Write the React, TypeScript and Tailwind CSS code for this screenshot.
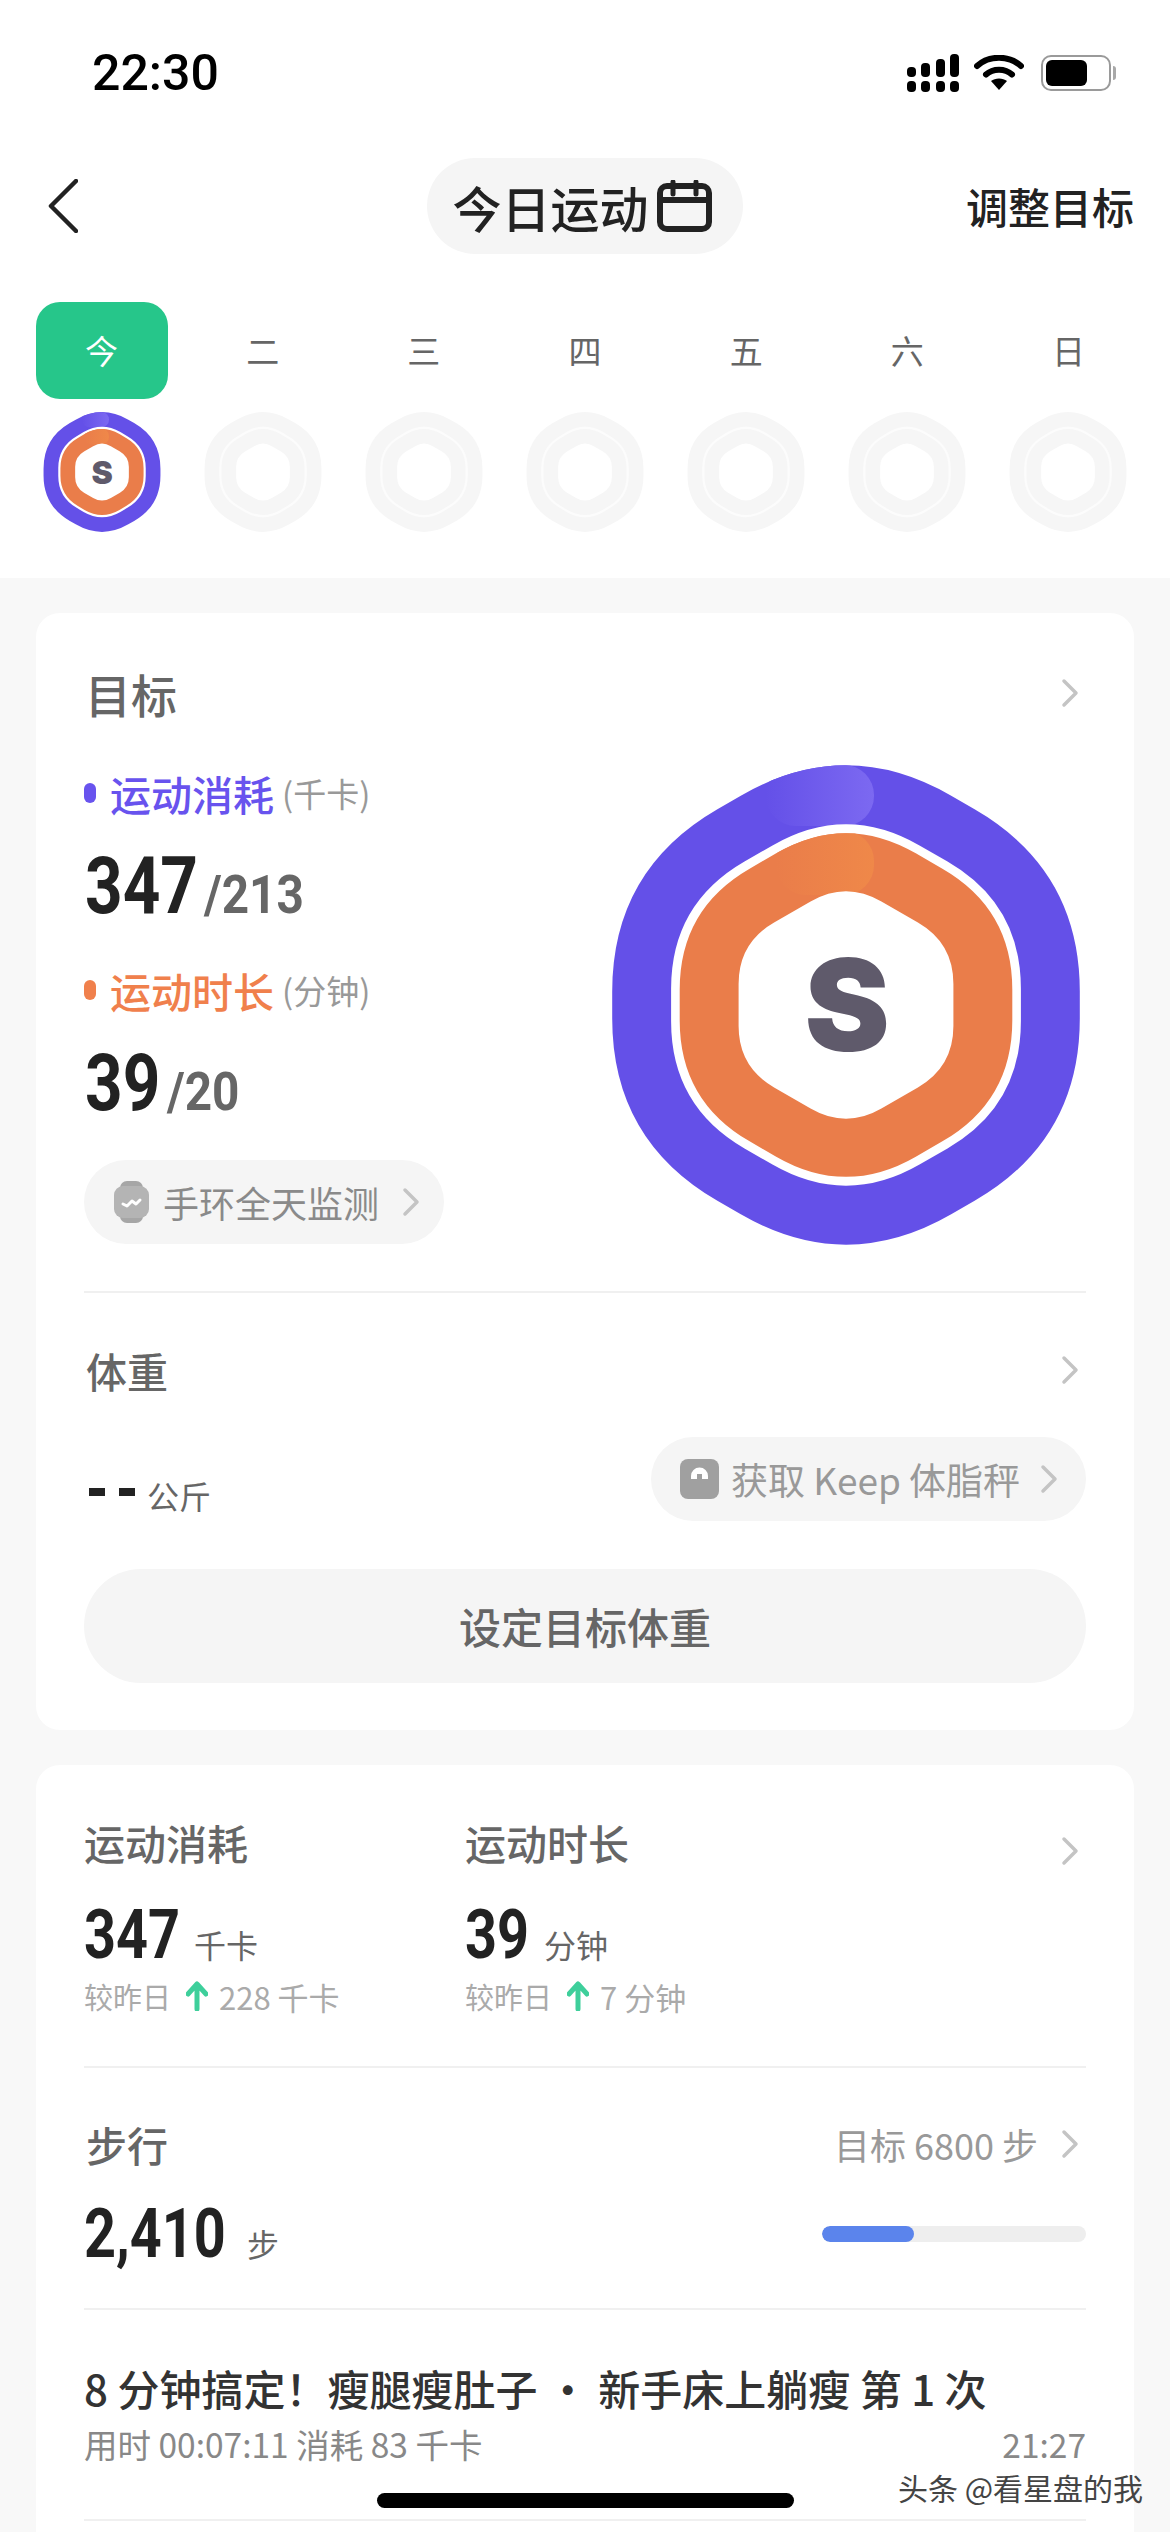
import React from 'react';

// rounded hexagon, pointy top
const hexPath = (r: number, f: number, c = 240) => {
  const pts = [0, 1, 2, 3, 4, 5].map((i) => {
    const a = (-90 + i * 60) * (Math.PI / 180);
    return [c + r * Math.cos(a), c + r * Math.sin(a)];
  });
  let d = '';
  pts.forEach((p, i) => {
    const prev = pts[(i + 5) % 6];
    const next = pts[(i + 1) % 6];
    const a = [p[0] + (prev[0] - p[0]) * f, p[1] + (prev[1] - p[1]) * f];
    const b = [p[0] + (next[0] - p[0]) * f, p[1] + (next[1] - p[1]) * f];
    d += `${i === 0 ? 'M' : 'L'}${a[0].toFixed(1)} ${a[1].toFixed(1)} Q${p[0].toFixed(1)} ${p[1].toFixed(1)} ${b[0].toFixed(1)} ${b[1].toFixed(1)} `;
  });
  return d + 'Z';
};

const Ring = ({ size, active, id }: { size: number; active?: boolean; id: string }) => {
  const outer = hexPath(270, 0.45);
  const gap = hexPath(202, 0.42);
  const mid = hexPath(192, 0.42);
  const inner = hexPath(124, 0.33);
  if (!active) {
    return (
      <svg width={size} height={size} viewBox="0 0 480 480">
        <path d={outer} fill="#f6f6f6" />
        <path d={gap} fill="#fcfcfc" />
        <path d={mid} fill="#f6f6f6" />
        <path d={inner} fill="#ffffff" />
      </svg>
    );
  }
  return (
    <svg width={size} height={size} viewBox="0 0 480 480">
      <defs>
        <linearGradient id={`${id}-p`} x1="0" x2="1" y1="0" y2="0">
          <stop offset="0" stopColor="#6450e8" />
          <stop offset="1" stopColor="#7c69f1" />
        </linearGradient>
        <linearGradient id={`${id}-o`} x1="0" x2="1" y1="0" y2="0">
          <stop offset="0" stopColor="#ea7d4a" />
          <stop offset="1" stopColor="#ef8849" />
        </linearGradient>
        <clipPath id={`${id}-c1`}>
          <path d={outer} />
        </clipPath>
        <clipPath id={`${id}-c2`}>
          <path d={mid} />
        </clipPath>
      </defs>
      <path d={outer} fill="#6450e8" />
      <g clipPath={`url(#${id}-c1)`}>
        <rect x="160" y="0" width="108" height="61" rx="30" fill={`url(#${id}-p)`} />
      </g>
      <path d={gap} fill="#ffffff" />
      <path d={mid} fill="#ea7d4a" />
      <g clipPath={`url(#${id}-c2)`}>
        <rect x="170" y="66" width="98" height="64" rx="30" fill={`url(#${id}-o)`} />
      </g>
      <path d={inner} fill="#ffffff" />
      <text
        x="241"
        y="286"
        textAnchor="middle"
        fontSize="128"
        fontWeight="900"
        fontFamily="Inter, sans-serif"
        fill="#5f5a6b"
      >
        S
      </text>
    </svg>
  );
};

const Chevron = ({ className }: { className?: string }) => (
  <svg className={className} width="18" height="30" viewBox="0 0 18 30" fill="none">
    <path d="M3 3 L15 15 L3 27" stroke="#c4c4c4" strokeWidth="3.5" strokeLinecap="round" strokeLinejoin="round" />
  </svg>
);

const UpArrow = () => (
  <svg width="22" height="30" viewBox="0 0 22 30" fill="none">
    <path d="M11 28 V4 M2 13 L11 3 L20 13" stroke="#3ecf9b" strokeWidth="5" strokeLinecap="round" strokeLinejoin="round" />
  </svg>
);

const StatusIcons = () => (
  <div className="flex items-center">
    <svg width="52" height="38" viewBox="0 0 52 38" fill="#000">
      <rect x="0" y="13" width="9" height="10" rx="4" />
      <rect x="0" y="27" width="9" height="11" rx="4" />
      <rect x="14" y="9" width="9" height="14" rx="4" />
      <rect x="14" y="27" width="9" height="11" rx="4" />
      <rect x="29" y="5" width="9" height="18" rx="4" />
      <rect x="29" y="27" width="9" height="11" rx="4" />
      <rect x="43" y="0" width="9" height="23" rx="4" />
      <rect x="43" y="27" width="9" height="11" rx="4" />
    </svg>
    <svg className="ml-[15px]" width="50" height="36" viewBox="0 0 50 36" fill="none">
      <path d="M3 11 C15 0 35 0 47 11" stroke="#000" strokeWidth="6" strokeLinecap="round" />
      <path d="M12 19.5 C19 13 31 13 38 19.5" stroke="#000" strokeWidth="6" strokeLinecap="round" />
      <path d="M25 35 L17 26 C21 22.5 29 22.5 33 26 Z" fill="#000" />
    </svg>
    <div className="ml-[17px] flex items-center">
      <div className="flex h-[36px] w-[70px] items-center rounded-[10px] border-2 border-[#9a9a9a] p-[3px]">
        <div className="h-full w-[41px] rounded-[6px] bg-black" />
      </div>
      <div className="ml-[2px] h-[14px] w-[3px] rounded-r-full bg-[#a8a8a8]" />
    </div>
  </div>
);

const Metric = ({ color, label, unit, value, goal, valueClass, goalClass }: { color: string; label: string; unit: string; value: string; goal: string; valueClass: string; goalClass: string }) => (
  <div>
    <div className="flex h-[50px] items-center">
      <span className="h-[20px] w-[12px] rounded-full" style={{ backgroundColor: color }} />
      <span className="ml-[14px] text-[41px] leading-none font-medium" style={{ color }}>
        {label}
      </span>
      <span className="ml-[8px] text-[33px] leading-none text-[#999]">({unit})</span>
    </div>
    <div className="mt-[34px] flex h-[68px] items-baseline font-['Roboto',sans-serif] font-bold">
      <span className={`ml-[1px] inline-block origin-left scale-x-[0.82] text-[80px] leading-[68px] text-[#222] ${valueClass}`}>{value}</span>
      <span className={`ml-[8px] inline-block origin-left scale-x-[0.9] text-[53px] leading-[68px] text-[#666] ${goalClass}`}>/{goal}</span>
    </div>
  </div>
);

// the numbers in the lower card are a condensed face, squeeze Roboto to get there
const NarrowNum = ({ value, className }: { value: string; className: string }) => (
  <span className={`inline-block origin-left scale-x-[0.82] font-['Roboto',sans-serif] text-[68px] leading-[70px] font-bold whitespace-nowrap text-[#222] ${className}`}>
    {value}
  </span>
);

const Stat = ({ title, value, unit, delta, numClass }: { title: string; value: string; unit: string; delta: string; numClass: string }) => (
  <div className="w-[381px]">
    <div className="-mt-[5px] text-[41px] leading-[50px] font-medium text-[#666]">{title}</div>
    <div className="mt-[33px] flex h-[70px] items-baseline">
      <NarrowNum value={value} className={numClass} />
      <span className="ml-[18px] text-[32px] leading-none text-[#666]">{unit}</span>
    </div>
    <div className="mt-[6px] flex h-[40px] items-center text-[29px] leading-none text-[#aaa]">
      <span>较昨日</span>
      <span className="mx-[15px] flex items-center">
        <UpArrow />
      </span>
      <span className="-ml-[4px] text-[31px]">{delta}</span>
    </div>
  </div>
);

const days = ['今', '二', '三', '四', '五', '六', '日'];

export default function App() {
  return (
    <div className="relative flex h-[2532px] w-[1170px] flex-col overflow-hidden bg-white font-['Noto_Sans_CJK_SC','Noto_Sans',sans-serif]">
      {/* status bar */}
      <div className="flex h-[146px] shrink-0 items-center justify-between pr-[54px] pl-[92px]">
        <span className="font-['Roboto',sans-serif] text-[50px] font-medium text-black">22:30</span>
        <StatusIcons />
      </div>

      {/* header */}
      <div className="flex h-[120px] shrink-0 items-center pr-[36px] pl-[48px]">
        <svg width="30" height="54" viewBox="0 0 30 54" fill="none">
          <path d="M28 2 L3 27 L28 52" stroke="#222" strokeWidth="4.5" strokeLinecap="round" strokeLinejoin="round" />
        </svg>
        <div className="ml-[349px] flex h-[96px] w-[316px] items-center justify-center rounded-full bg-[#f5f5f5] pr-[6px]">
          <span className="text-[49px] leading-none font-medium text-[#222]">今日运动</span>
          <svg className="ml-[8px]" width="55" height="52" viewBox="0 0 55 52" fill="none">
            <rect x="3" y="6" width="49" height="43" rx="7" stroke="#222" strokeWidth="6" />
            <path d="M3 20 H52" stroke="#222" strokeWidth="6" />
            <path d="M16 2 V14 M39 2 V14" stroke="#222" strokeWidth="5" strokeLinecap="round" />
          </svg>
        </div>
        <span className="ml-auto text-[42px] leading-none font-medium text-[#222]">调整目标</span>
      </div>

      {/* week */}
      <div className="mt-[36px] grid shrink-0 grid-cols-7 px-[21px] pb-[46px]">
        {days.map((d, i) => (
          <div key={d} className="flex flex-col items-center">
            <div
              className={`flex h-[97px] w-[132px] items-center justify-center rounded-[24px] text-[33px] leading-none ${
                i === 0 ? 'bg-[#26c68a] text-white' : 'text-[#666]'
              }`}
            >
              {d}
            </div>
            <div className="mt-[13px]">
              <Ring size={120} active={i === 0} id={`day${i}`} />
            </div>
          </div>
        ))}
      </div>

      {/* content */}
      <div className="flex flex-1 flex-col bg-[#f8f8f8] px-[36px] pt-[35px]">
        <div className="h-[1117px] shrink-0 rounded-[24px] bg-white px-[48px]">
          <div className="flex h-[680px] flex-col border-b-2 border-[#f0f0f0]">
            <div className="mt-[55px] flex h-[50px] items-center justify-between pr-[7px]">
              <span className="ml-[1px] text-[46px] leading-none font-medium text-[#666]">目标</span>
              <Chevron />
            </div>
            <div className="flex justify-between">
              <div className="mt-[50px]">
                <Metric color="#6853ee" label="运动消耗" unit="千卡" value="347" goal="213" valueClass="w-[111px]" goalClass="w-[100px]" />
                <div className="mt-[45px]">
                  <Metric color="#f0804c" label="运动时长" unit="分钟" value="39" goal="20" valueClass="w-[74px]" goalClass="w-[71px]" />
                </div>
                <div className="mt-[43px] flex h-[84px] w-[360px] items-center rounded-full bg-[#f5f5f5] pl-[30px]">
                  <svg width="35" height="42" viewBox="0 0 35 42">
                    <rect x="6" y="0" width="23" height="42" rx="7" fill="#a6a6a6" />
                    <rect x="0" y="5" width="35" height="32" rx="9" fill="#b4b4b4" />
                    <path d="M9 23 L13 25 L18 20 L22 23 L26 19" fill="none" stroke="#fff" strokeWidth="3" strokeLinecap="round" strokeLinejoin="round" />
                  </svg>
                  <span className="ml-[14px] text-[36px] leading-none text-[#8a8a8a]">手环全天监测</span>
                  <Chevron className="ml-[23px]" />
                </div>
              </div>
              <div className="mt-[47px]">
                <Ring size={480} active id="main" />
              </div>
            </div>
          </div>

          <div className="mt-[52px] flex h-[50px] items-center justify-between pr-[7px]">
            <span className="ml-[2px] text-[41px] leading-none font-medium text-[#666]">体重</span>
            <Chevron />
          </div>
          <div className="mt-[42px] flex h-[84px] items-center justify-between">
            <div className="mt-[32px] flex items-end">
              <span className="mb-[15px] ml-[5px] flex gap-[14px]">
                <span className="h-[8px] w-[16px] bg-[#222]" />
                <span className="h-[8px] w-[16px] bg-[#222]" />
              </span>
              <span className="ml-[12px] text-[32px] leading-none text-[#666]">公斤</span>
            </div>
            <div className="flex h-[84px] w-[435px] items-center rounded-full bg-[#f5f5f5] pl-[29px]">
              <svg width="39" height="40" viewBox="0 0 39 40">
                <rect width="39" height="40" rx="8" fill="#a0a0a0" />
                <path d="M11 17 A8.5 8.5 0 0 1 28 17 L28 20 L22 20 L22 15 L17 15 L17 20 L11 20 Z" fill="#fff" />
              </svg>
              <span className="ml-[12px] text-[37px] leading-none whitespace-pre text-[#999]">获取 Keep 体脂秤</span>
              <Chevron className="ml-[20px]" />
            </div>
          </div>
          <button className="mt-[48px] flex h-[114px] w-full items-center justify-center rounded-full bg-[#f5f5f5] text-[42px] leading-none font-medium text-[#666]">
            设定目标体重
          </button>
        </div>

        <div className="mt-[35px] flex-1 rounded-t-[24px] bg-white px-[48px]">
          <div className="flex h-[303px] border-b-2 border-[#f0f0f0] pt-[57px]">
            <Stat title="运动消耗" value="347" unit="千卡" delta="228 千卡" numClass="w-[92px]" />
            <Stat title="运动时长" value="39" unit="分钟" delta="7 分钟" numClass="w-[61px]" />
            <Chevron className="mt-[14px] mr-[7px] ml-auto" />
          </div>

          <div className="h-[242px] border-b-2 border-[#f0f0f0] pt-[51px]">
            <div className="flex h-[50px] items-center justify-between pr-[7px]">
              <span className="ml-[2px] text-[41px] leading-none font-medium text-[#666]">步行</span>
              <div className="flex items-center">
                <span className="text-[36px] leading-none text-[#999]">目标 6800 步</span>
                <Chevron className="ml-[23px]" />
              </div>
            </div>
            <div className="mt-[30px] flex h-[70px] items-center justify-between">
              <div className="flex items-baseline">
                <NarrowNum value="2,410" className="w-[143px]" />
                <span className="ml-[20px] text-[32px] leading-none text-[#666]">步</span>
              </div>
              <div className="h-[16px] w-[264px] overflow-hidden rounded-full bg-[#eeeeee]">
                <div className="h-full w-[92px] rounded-full bg-[#5b84ec]" />
              </div>
            </div>
          </div>

          <div className="h-[211px] border-b-2 border-[#f0f0f0] pt-[52px]">
            <div className="text-[42px] leading-[52px] font-medium whitespace-pre text-[#333]">8 分钟搞定！瘦腿瘦肚子 · 新手床上躺瘦 第 1 次</div>
            <div className="mt-[8px] flex justify-between text-[33.5px] leading-[44px] text-[#888]">
              <span>用时 00:07:11 消耗 83 千卡</span>
              <span>21:27</span>
            </div>
          </div>
        </div>
      </div>

      {/* home bar + watermark, on top of the page */}
      <div className="absolute bottom-[24px] left-[377px] h-[15px] w-[417px] rounded-full bg-black" />
      <div className="absolute top-[2467px] left-[898px] text-[30px] leading-[40px] whitespace-nowrap text-[#444]">头条 @看星盘的我</div>
    </div>
  );
}
